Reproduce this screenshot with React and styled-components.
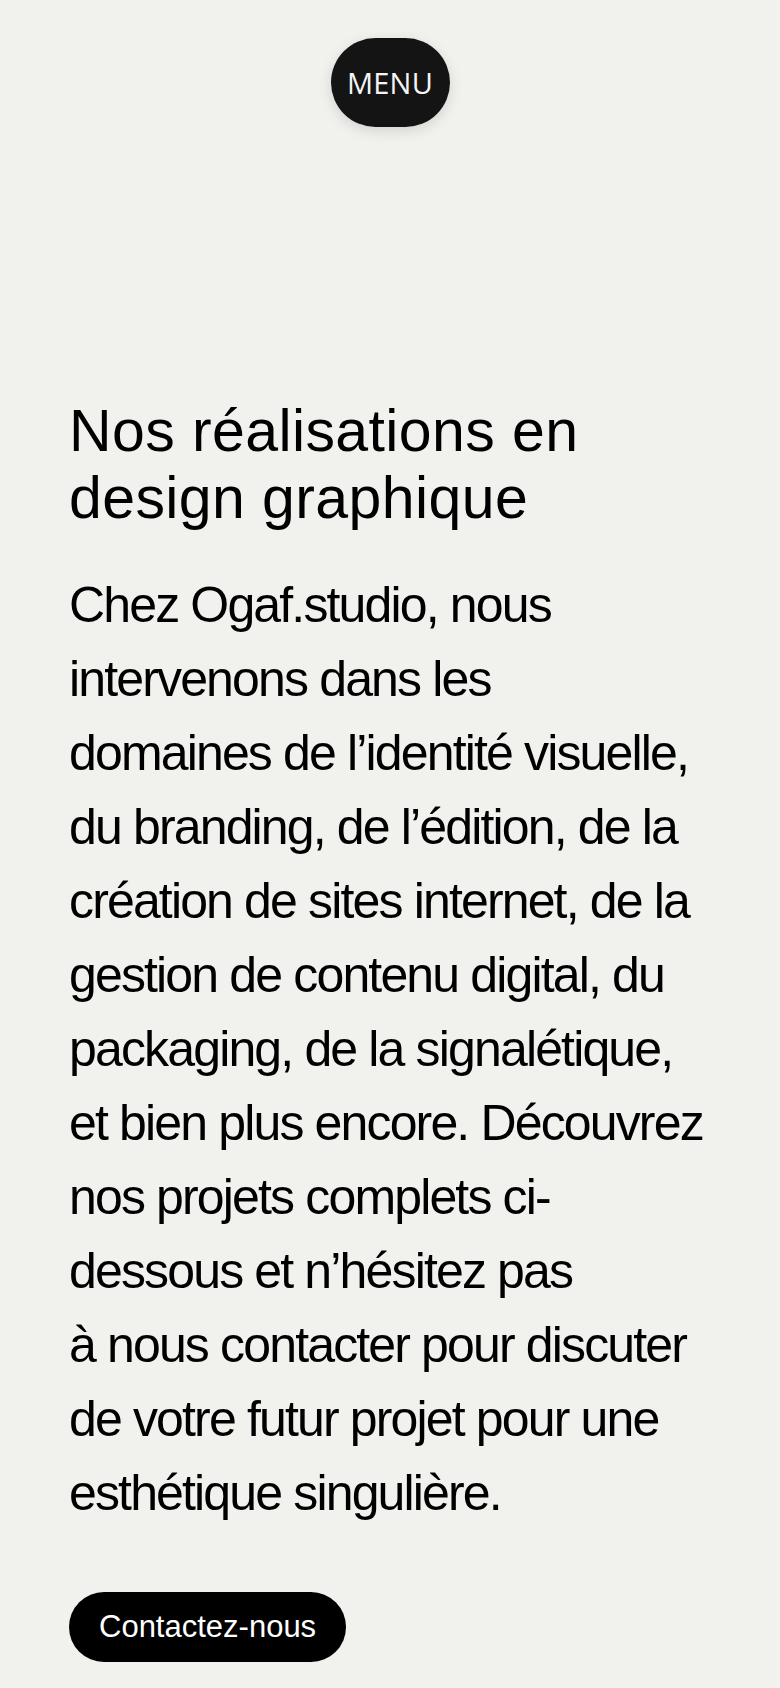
import React from "react";
import styled, { createGlobalStyle } from "styled-components";

const GlobalStyle = createGlobalStyle`
  html, body {
    margin: 0;
    padding: 0;
    background: #f1f2ee;
  }
  * {
    box-sizing: border-box;
  }
`;

const Page = styled.div`
  min-height: 1688px;
  background: #f1f2ee;
  display: flex;
  flex-direction: column;
  padding: 38px 20px 26px 69px;
  color: #000;
`;

const Header = styled.header`
  display: flex;
  justify-content: center;
  padding-right: 49px;
`;

const MenuButton = styled.button`
  width: 119px;
  height: 89px;
  border: none;
  border-radius: 45px;
  background: #141414;
  color: #f4f4f4;
  font-family: "Open Sans", "Noto Sans", sans-serif;
  font-size: 29px;
  letter-spacing: 0.2px;
  box-shadow: 0 4px 14px rgba(0, 0, 0, 0.12);
  cursor: pointer;
`;

const Content = styled.section`
  display: flex;
  flex-direction: column;
  align-items: flex-start;
  margin-top: 271px;
`;

const Title = styled.h1`
  margin: 0;
  font-family: "Liberation Sans", Arial, sans-serif;
  font-weight: 400;
  font-size: 59px;
  line-height: 67px;
  letter-spacing: 0.4px;
`;

const Text = styled.p`
  margin: 36px 0 0;
  font-family: "Liberation Sans", Arial, sans-serif;
  font-size: 50px;
  line-height: 74px;
  letter-spacing: -1.85px;
  white-space: nowrap;
`;

const ContactButton = styled.a`
  margin-top: 62px;
  height: 70px;
  display: inline-flex;
  align-items: center;
  padding: 0 30px;
  border-radius: 35px;
  background: #000;
  color: #fff;
  font-family: "Liberation Sans", Arial, sans-serif;
  font-size: 31px;
  text-decoration: none;
`;

const lines = [
  "Chez Ogaf.studio, nous",
  "intervenons dans les",
  "domaines de l’identité visuelle,",
  "du branding, de l’édition, de la",
  "création de sites internet, de la",
  "gestion de contenu digital, du",
  "packaging, de la signalétique,",
  "et bien plus encore. Découvrez",
  "nos projets complets ci-",
  "dessous et n’hésitez pas",
  "à nous contacter pour discuter",
  "de votre futur projet pour une",
  "esthétique singulière.",
];

export default function App() {
  return (
    <>
      <GlobalStyle />
      <Page>
        <Header>
          <MenuButton>MENU</MenuButton>
        </Header>
        <Content>
          <Title>
            Nos réalisations en
            <br />
            design graphique
          </Title>
          <Text>
            {lines.map((line, i) => (
              <React.Fragment key={i}>
                {line}
                {i < lines.length - 1 && <br />}
              </React.Fragment>
            ))}
          </Text>
          <ContactButton href="#">Contactez-nous</ContactButton>
        </Content>
      </Page>
    </>
  );
}
